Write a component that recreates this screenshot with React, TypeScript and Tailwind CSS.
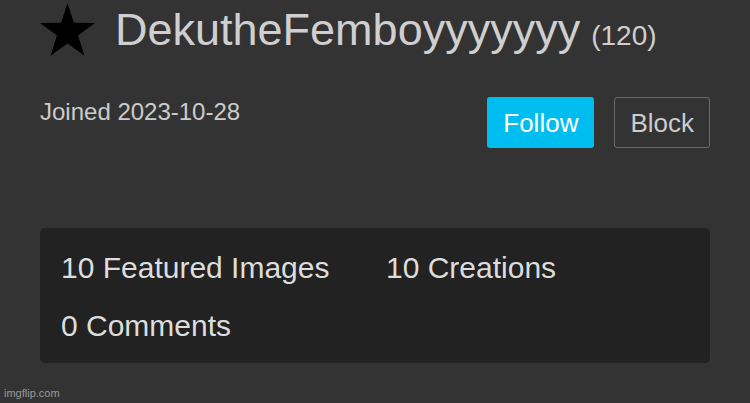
import React from "react";

const stats = [
  { label: "10 Featured Images" },
  { label: "10 Creations" },
  { label: "0 Comments" },
];

function Star() {
  return (
    <svg className="h-[53px] w-[55px] shrink-0" viewBox="0 0 24 23" fill="#000">
      <polygon points="12,0 14.8,8.6 24,8.7 16.6,14.1 19.4,23 12,17.6 4.6,23 7.4,14.1 0,8.7 9.2,8.6" />
    </svg>
  );
}

export default function App() {
  return (
    <div className="relative h-[403px] w-[750px] overflow-hidden bg-[#333333] px-[40px] pt-[3px] font-['Liberation_Sans',Arial,sans-serif]">
      <div className="flex items-center">
        <Star />
        <div className="ml-[20px] flex items-baseline">
          <span className="text-[45px] leading-none text-[#cfcfcf]">DekutheFemboyyyyyyy</span>
          <span className="ml-[11px] text-[28px] leading-none text-[#cfcfcf]">(120)</span>
        </div>
      </div>

      <div className="mt-[41px] flex items-start justify-between">
        <p className="mt-[3px] text-[24px] leading-none text-[#cccccc]">Joined 2023-10-28</p>
        <div className="flex gap-[20px]">
          <button className="h-[51px] rounded-[3px] bg-[#00bdef] px-[16px] text-[26px] leading-none text-white" type="button">
            Follow
          </button>
          <button className="h-[51px] rounded-[3px] border border-[#6a6a6a] px-[15px] text-[26px] leading-none text-[#cccccc]" type="button">
            Block
          </button>
        </div>
      </div>

      <div className="mt-[80px] grid grid-cols-[325px_1fr] gap-y-[28px] rounded-[5px] bg-[#222222] pb-[22px] pl-[21px] pr-[21px] pt-[25px]">
        {stats.map((stat) => (
          <span key={stat.label} className="text-[30px] leading-none text-[#dddddd]">
            {stat.label}
          </span>
        ))}
      </div>

      <span className="absolute bottom-[4px] left-[4px] text-[11px] leading-none text-[#9a9a9a]">imgflip.com</span>
    </div>
  );
}
